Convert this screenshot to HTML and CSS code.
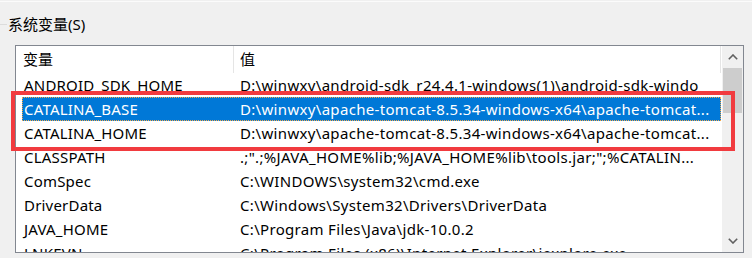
FILE: index.html
```html
<!DOCTYPE html>
<html lang="zh-CN">
<head>
<meta charset="utf-8">
<title>系统变量</title>
<link rel="stylesheet" href="styles.css">
</head>
<body>
<div class="topline"></div>
<div class="group-head"><span class="gline"></span><span class="glabel">系统变量(S)</span></div>
<div class="list">
  <div class="content">
    <div class="header">
      <div class="hcol hname">变量</div>
      <div class="hcol hval">值</div>
    </div>
    <div class="row"><div class="cname">ANDROID_SDK_HOME</div><div class="cval">D:\winwxy\android-sdk_r24.4.1-windows(1)\android-sdk-windo</div></div>
    <div class="row selected"><div class="cname">CATALINA_BASE</div><div class="cval">D:\winwxy\apache-tomcat-8.5.34-windows-x64\apache-tomcat...</div></div>
    <div class="row"><div class="cname">CATALINA_HOME</div><div class="cval">D:\winwxy\apache-tomcat-8.5.34-windows-x64\apache-tomcat...</div></div>
    <div class="row"><div class="cname">CLASSPATH</div><div class="cval">.;".;%JAVA_HOME%lib;%JAVA_HOME%lib\tools.jar;";%CATALIN...</div></div>
    <div class="row"><div class="cname">ComSpec</div><div class="cval">C:\WINDOWS\system32\cmd.exe</div></div>
    <div class="row"><div class="cname">DriverData</div><div class="cval">C:\Windows\System32\Drivers\DriverData</div></div>
    <div class="row"><div class="cname">JAVA_HOME</div><div class="cval">C:\Program Files\Java\jdk-10.0.2</div></div>
    <div class="row"><div class="cname">LNKEVN</div><div class="cval">C:\Program Files (x86)\Internet Explorer\iexplore.exe</div></div>
  </div>
  <div class="scrollbar">
    <div class="sbtn"><svg width="10" height="6" viewBox="0 0 10 6"><polyline points="0.8,5.2 5,1 9.2,5.2" fill="none" stroke="#606060" stroke-width="1.6"/></svg></div>
    <div class="thumb"></div>
    <div class="track"></div>
    <div class="sbtn"><svg width="10" height="6" viewBox="0 0 10 6"><polyline points="0.8,0.8 5,5 9.2,0.8" fill="none" stroke="#606060" stroke-width="1.6"/></svg></div>
  </div>
</div>
<div class="highlight"></div>
</body>
</html>
```
FILE: styles.css
```css
html, body {
  margin: 0;
  padding: 0;
}
body {
  width: 752px;
  height: 258px;
  overflow: hidden;
  background: #f0f0f0;
  position: relative;
  font-family: "Noto Sans", "Noto Sans CJK SC", sans-serif;
  font-size: 15px;
  color: #000;
}
.topline {
  margin-top: 1px;
  height: 1px;
  background: #fbfbfb;
}
.group-head {
  margin-top: 12px;
  height: 20px;
  display: flex;
  align-items: center;
}
.gline {
  width: 7px;
  height: 1px;
  background: #dcdcdc;
  margin-right: 1px;
}
.glabel {
  line-height: 20px;
  white-space: nowrap;
}
.list {
  margin-top: 11px;
  margin-left: 15px;
  width: 729px;
  height: 208px;
  box-sizing: border-box;
  border: 1px solid #828790;
  background: #fff;
  display: flex;
  overflow: hidden;
}
.content {
  flex: 1;
  overflow: hidden;
}
.header {
  height: 27px;
  display: flex;
}
.hcol {
  line-height: 27px;
  height: 27px;
  box-sizing: border-box;
  border-right: 1px solid #e5e5e5;
  white-space: nowrap;
}
.hname {
  width: 218px;
  padding-left: 7px;
}
.hval {
  flex: 1;
  padding-left: 6px;
  margin-right: 1px;
}
.row {
  height: 24px;
  margin-left: 6px;
  margin-right: 1px;
  display: flex;
  line-height: 24px;
  box-sizing: border-box;
  white-space: nowrap;
}
.cname {
  width: 212px;
  padding-left: 2px;
  box-sizing: border-box;
  overflow: hidden;
  letter-spacing: 0.2px;
}
.cval {
  flex: 1;
  padding-left: 6px;
  overflow: hidden;
  letter-spacing: 0.32px;
}
.selected {
  background: #0078d7;
  color: #fff;
  outline: 1px dotted #f3a94b;
  outline-offset: -1px;
}
.scrollbar {
  width: 21px;
  background: #f0f0f0;
  display: flex;
  flex-direction: column;
}
.sbtn {
  height: 22px;
  display: flex;
  align-items: center;
  justify-content: center;
}
.sbtn svg {
  display: block;
}
.thumb {
  height: 45px;
  margin: 0 1px;
  background: #cdcdcd;
}
.track {
  flex: 1;
}
.highlight {
  position: absolute;
  left: 11px;
  top: 91px;
  width: 724px;
  height: 60px;
  box-sizing: border-box;
  border: 4px solid #f13b3f;
}
```
